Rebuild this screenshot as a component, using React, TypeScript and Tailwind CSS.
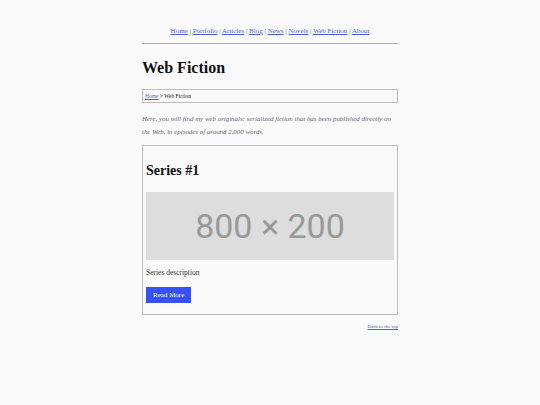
export default function App() {
  const links = ["Home", "Portfolio", "Articles", "Blog", "News", "Novels", "Web Fiction", "About"];

  return (
    <div className="min-h-[405px] bg-[#fafafa] font-['Liberation_Serif',serif] text-[#222]">
      <div className="mx-auto w-[256px] pt-[25px]">
        <nav className="text-center text-[7px] leading-[12px] text-[#555]">
          {links.map((l, i) => (
            <span key={l}>
              {i > 0 && " | "}
              <a href="#" className="text-[#4a5ee0] underline">
                {l}
              </a>
            </span>
          ))}
        </nav>
        <hr className="mt-[6px] border-t border-[#a9abb3]" />

        <h1 className="mt-[14px] text-[16px] font-bold leading-[20px] text-[#111]">Web Fiction</h1>

        <div className="mt-[11px] border border-[#bcbdc4] px-[2px] py-[2px] text-[5.5px] leading-[8px]">
          <a href="#" className="text-[#4a5ee0] underline">Home</a>
          <span className="text-[#111]"> &gt; Web Fiction</span>
        </div>

        <p className="mt-[9px] text-[6.9px] italic leading-[13px] text-[#5f6676]">
          Here, you will find my web originals: serialized fiction that has been published directly on the Web, in episodes of around 2,000 words.
        </p>

        <div className="mt-[7px] border border-[#bcbdc4] px-[3px] pb-[10px] pt-[15px]">
          <h2 className="text-[14px] font-bold leading-[20px] text-[#111]">Series #1</h2>
          <div className="mt-[11px] flex h-[68px] items-center justify-center bg-[#dddddd] font-['Roboto',sans-serif] text-[34px] text-[#999]">
            800 × 200
          </div>
          <p className="mt-[7px] text-[7.5px] leading-[12px] text-[#333]">Series description</p>
          <button className="mt-[8px] h-[16px] bg-[#3452f7] px-[7px] text-[7px] text-white">Read More</button>
        </div>

        <div className="mt-[8px] text-right text-[5px] leading-[8px]">
          <a href="#" className="text-[#4a5ee0] underline">Back to the top</a>
        </div>
      </div>
    </div>
  );
}
